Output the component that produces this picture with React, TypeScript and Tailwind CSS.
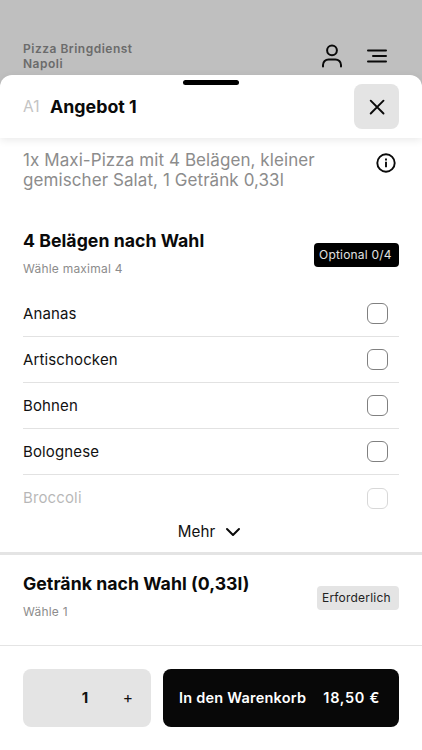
import { useState } from 'react'

const TOPPINGS = ['Ananas', 'Artischocken', 'Bohnen', 'Bolognese', 'Broccoli']

const PRICE = 18.5

function UserIcon() {
  return (
    <svg width="24" height="26" viewBox="0 0 24 26" fill="none" stroke="#0a0a0a" strokeWidth="2" strokeLinecap="round">
      <circle cx="12" cy="7.3" r="4.9" />
      <path d="M3 23.4V22a5.6 5.6 0 0 1 5.6-5.6h6.8A5.6 5.6 0 0 1 21 22v1.4" />
    </svg>
  )
}

function MenuIcon() {
  return (
    <svg width="22" height="16" viewBox="0 0 22 16" fill="none" stroke="#0a0a0a" strokeWidth="2" strokeLinecap="round">
      <path d="M2 2.4h18M7 8h13M2 13.6h18" />
    </svg>
  )
}

function InfoIcon() {
  return (
    <svg width="20" height="20" viewBox="0 0 20 20" fill="none" stroke="#0a0a0a" strokeWidth="1.9">
      <circle cx="10" cy="10" r="8.7" />
      <path d="M10 8.8v5.4" />
      <path d="M10 5.6v1.9" />
    </svg>
  )
}

function SectionHead({ title, hint, children }: { title: string; hint: string; children: React.ReactNode }) {
  return (
    <div className="flex items-center justify-between">
      <div>
        <h2 className="text-[17.7px] leading-6 font-bold tracking-[0.03px] text-[#0a0a0a]">{title}</h2>
        <p className="mt-[6px] text-[12px] leading-5 tracking-[0.22px] text-[#8c8c8c]">{hint}</p>
      </div>
      {children}
    </div>
  )
}

export default function App() {
  const [count, setCount] = useState(1)
  const [selected, setSelected] = useState<string[]>([])

  const toggle = (name: string) =>
    setSelected((s) => (s.includes(name) ? s.filter((n) => n !== name) : s.length < 4 ? [...s, name] : s))

  return (
    <div className="flex h-[750px] w-[422px] flex-col overflow-hidden bg-[#bfbfbf] font-['Inter',sans-serif] text-[#111]">
      <header className="flex h-[75px] shrink-0 justify-between pt-[41px] pr-[34px] pl-[23px]">
        <p className="w-[130px] text-[12px] leading-[15px] font-semibold tracking-[0.5px] text-[#6b6b6b]">
          Pizza Bringdienst Napoli
        </p>
        <div className="flex h-[30px] items-center gap-[22px]">
          <UserIcon />
          <MenuIcon />
        </div>
      </header>

      <main className="flex min-h-0 flex-1 flex-col rounded-t-[12px] bg-white">
        <div className="flex h-[63px] shrink-0 flex-col rounded-t-[12px] pt-[5px] shadow-[0_2px_8px_rgba(0,0,0,0.09)]">
          <div className="h-[5px] w-14 shrink-0 self-center rounded-full bg-black" />
          <div className="-mt-px flex h-[45px] items-center px-[23px]">
            <span className="w-[27px] text-[15.5px] text-[#c4c4c4]">A1</span>
            <h1 className="flex-1 pt-px text-[17.8px] font-bold text-[#0a0a0a]">Angebot 1</h1>
            <button className="flex size-[45px] items-center justify-center rounded-[8px] bg-[#e4e4e4]" aria-label="Schließen">
              <svg width="16" height="16" viewBox="0 0 16 16" stroke="#0a0a0a" strokeWidth="1.9" strokeLinecap="round">
                <path d="M1.7 1.7l12.8 12.8M14.5 1.7L1.7 14.5" />
              </svg>
            </button>
          </div>
        </div>

        <div className="flex h-[79px] shrink-0 items-start justify-between pt-[12px] pr-[26px] pl-[23px]">
          <p className="w-[310px] text-[17px] leading-5 tracking-[0.08px] text-[#8c8c8c]">
            1x Maxi-Pizza mit 4 Belägen, kleiner gemischer Salat, 1 Getränk 0,33l
          </p>
          <div className="pt-[3px]">
            <InfoIcon />
          </div>
        </div>

        <section className="shrink-0 px-[23px] pt-[12px]">
          <SectionHead title="4 Belägen nach Wahl" hint="Wähle maximal 4">
            <span className="mt-px flex h-6 w-[85px] items-center rounded-[4px] bg-black pl-[5px] text-[12px] tracking-[0.2px] text-[#e2e2e2]">
              Optional {selected.length}/4
            </span>
          </SectionHead>
          <ul className="mt-[12px]">
            {TOPPINGS.map((name, i) => (
              <li
                key={name}
                onClick={() => toggle(name)}
                className={`flex h-[46px] items-center justify-between pr-[11px] ${
                  i < TOPPINGS.length - 1 ? 'border-b border-[#e2e2e2]' : 'opacity-30'
                }`}
              >
                <span className={`text-[15px] tracking-[0.13px] ${i < TOPPINGS.length - 1 ? 'pt-[2px]' : ''}`}>{name}</span>
                <span
                  className={`size-[21px] rounded-[6px] border border-[#808080] ${
                    selected.includes(name) ? 'bg-black' : 'bg-white'
                  }`}
                />
              </li>
            ))}
          </ul>
          <button className="mx-auto flex h-[31px] items-center gap-[10px] pr-[3px] pb-[9px] text-[15.2px]">
            Mehr
            <svg width="16" height="10" viewBox="0 0 16 10" fill="none" stroke="#0a0a0a" strokeWidth="2" strokeLinecap="round" strokeLinejoin="round">
              <path d="M2 2l6 6 6-6" />
            </svg>
          </button>
        </section>

        <section className="flex-1 border-t-[3px] border-[#e4e4e4] px-[23px] pt-[17px]">
          <SectionHead title="Getränk nach Wahl (0,33l)" hint="Wähle 1">
            <span className="mt-[2px] flex h-6 w-[82px] items-center rounded-[4px] bg-[#e4e4e4] pl-[5px] text-[12px] tracking-[0.2px] text-[#222]">
              Erforderlich
            </span>
          </SectionHead>
        </section>

        <footer className="flex h-[105px] shrink-0 gap-3 border-t border-[#e4e4e4] px-[23px] pt-[23px]">
          <div className="grid h-[58px] w-[128px] grid-cols-[42px_40px_46px] items-center rounded-[8px] bg-[#e4e4e4] text-center">
            <span />
            <span className="text-[15px] font-bold">{count}</span>
            <button onClick={() => setCount(count + 1)} className="text-[15.5px]">
              +
            </button>
          </div>
          <button className="flex h-[58px] flex-1 items-center justify-between rounded-[8px] bg-[#080808] pr-[19px] pl-[16px] text-[14.5px] font-semibold text-white">
            <span className="tracking-[0.22px]">In den Warenkorb</span>
            <span className="tracking-[0.7px]">{(PRICE * count).toFixed(2).replace('.', ',')} €</span>
          </button>
        </footer>
      </main>
    </div>
  )
}
